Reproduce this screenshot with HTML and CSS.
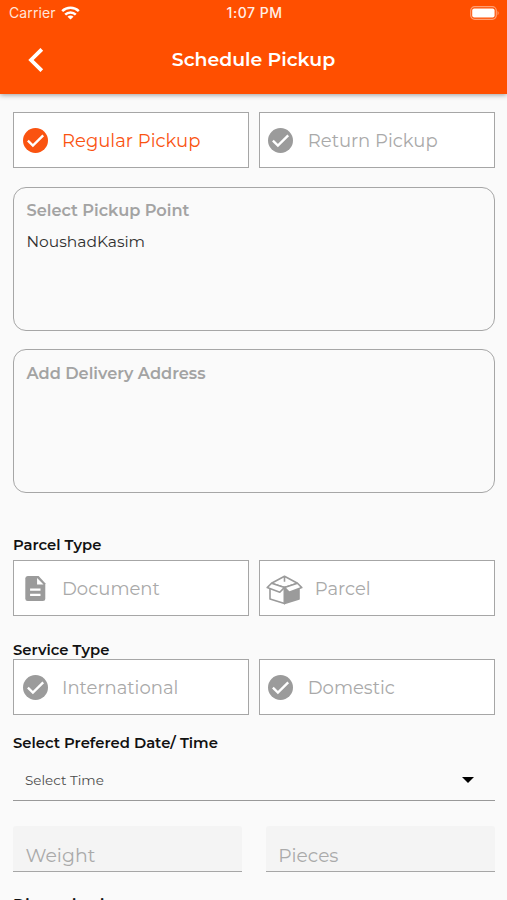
FILE: index.html
```html
<!DOCTYPE html>
<html lang="en">
<head>
<meta charset="utf-8">
<title>Schedule Pickup</title>
<link rel="stylesheet" href="styles.css">
</head>
<body>
<svg class="defs" width="0" height="0" aria-hidden="true">
  <symbol id="check" viewBox="0 0 24 24"><circle cx="12" cy="12" r="12" fill="currentColor"/><path d="M4.7 12.2l4.8 4.7L19.4 7.1" fill="none" stroke="#fff" stroke-width="2.3"/></symbol>
</svg>
<header class="top">
  <div class="status">
    <span class="carrier"><span>Carrier</span>
      <svg width="19" height="14" viewBox="0 0 19 14" fill="none" stroke="#fff" stroke-width="2.5"><path d="M1.2 5.2a11.8 11.8 0 0 1 16.6 0M4.2 8.6a7.5 7.5 0 0 1 10.6 0"/><path d="M9.5 13.6L6.5 10.8a4.2 4.2 0 0 1 6 0z" fill="#fff" stroke="none"/></svg>
    </span>
    <span class="clock">1:07 PM</span>
    <svg class="battery" width="30" height="14" viewBox="0 0 30 14"><rect x=".7" y=".7" width="25.6" height="12.6" rx="4" fill="none" stroke="#fff" stroke-opacity=".45" stroke-width="1.2"/><rect x="2.2" y="2.4" width="22.4" height="9.2" rx="2" fill="#fff"/><path d="M27.6 4.7q2 2.3 0 4.6z" fill="#fff" fill-opacity=".5"/></svg>
  </div>
  <div class="bar">
    <svg class="back" width="16" height="24" viewBox="0 0 16 24" fill="none" stroke="#fff" stroke-width="3.8"><path d="M13.8 1.3L3 12l10.8 10.7"/></svg>
    <h1 class="title">Schedule Pickup</h1>
  </div>
</header>
<main>
  <div class="pair">
    <div class="option active"><svg class="icon"><use href="#check"/></svg><span>Regular Pickup</span></div>
    <div class="option"><svg class="icon"><use href="#check"/></svg><span>Return Pickup</span></div>
  </div>
  <section class="card"><h2>Select Pickup Point</h2><p>NoushadKasim</p></section>
  <section class="card"><h2>Add Delivery Address</h2></section>
  <h3 class="label parcel-label">Parcel Type</h3>
  <div class="pair">
    <div class="option"><svg class="icon" viewBox="0 0 24 24"><path d="M4.5 0H15l6.4 6.9v14.7q0 2.4-2.4 2.4H4.5q-2.3 0-2.3-2.4V2.4Q2.2 0 4.5 0z" fill="currentColor"/><path d="M13.5 1.9v6.2h6.2zM6.8 12h10v2.1h-10zM6.8 17h10v2.1h-10z" fill="#fff"/></svg><span>Document</span></div>
    <div class="option parcel"><svg class="box" width="37" height="30" viewBox="0 0 37 30" fill="none" stroke="currentColor" stroke-width="1.6" stroke-linejoin="round"><path d="M18.5 12.4L33 14.5v9.6L18.5 28.6z" fill="currentColor"/><path d="M4 14v10l14.5 4.6V12.4M5.5 8.3L18.5 1.2 31.5 8.3M5.5 8.3l13 4.1 13-4.1M18.5 1.2v5.6"/><path d="M5.5 8.3L1.2 12.6l12.6 4.6 4.7-4.8zM31.5 8.3l4.3 4.3-12.6 4.6-4.7-4.8z" fill="#fff"/></svg><span>Parcel</span></div>
  </div>
  <h3 class="label service-label">Service Type</h3>
  <div class="pair">
    <div class="option"><svg class="icon"><use href="#check"/></svg><span>International</span></div>
    <div class="option"><svg class="icon"><use href="#check"/></svg><span>Domestic</span></div>
  </div>
  <h3 class="label date-label">Select Prefered Date/ Time</h3>
  <div class="select"><span>Select Time</span><svg width="12" height="6" viewBox="0 0 12 6"><path d="M0 0h12L6 6z"/></svg></div>
  <div class="fields">
    <div class="field weight">Weight</div>
    <div class="field">Pieces</div>
  </div>
  <h3 class="label dimension-label">Dimension in</h3>
</main>
</body>
</html>
```
FILE: styles.css
```css
* { box-sizing: border-box; }
html, body { height: 900px; overflow: hidden; }
body { margin: 0; background: #fafafa; font-family: Montserrat, Inter, sans-serif; color: #111; }
h1, h2, h3, p { margin: 0; white-space: nowrap; }
svg { flex: none; display: block; }
.defs { position: absolute; }
.top { height: 94px; background: #ff4f00; color: #fff; box-shadow: 0 1px 5px rgba(0,0,0,.38); }
.status { height: 26px; display: grid; grid-template-columns: 1fr auto 1fr; align-items: center; padding: 0 7px 0 9px; font-family: Inter, sans-serif; font-size: 14px; line-height: 20px; }
.carrier { display: flex; align-items: center; gap: 5px; color: #ffe5da; letter-spacing: .1px; }
.clock { font-weight: 500; color: #fff0e9; letter-spacing: .5px; }
.battery { justify-self: end; }
.bar { height: 67px; display: grid; grid-template-columns: 44px 1fr 44px; align-items: center; }
.back { justify-self: end; }
.title { text-align: center; font-size: 18.9px; font-weight: 600; line-height: 24px; }
main { padding: 18px 12.5px 0 13px; }
.pair { display: grid; grid-template-columns: 1fr 1fr; gap: 10px; }
.option { height: 56px; border: 1px solid #a6a6a6; background: #fff; display: flex; align-items: center; gap: 15px; padding-left: 8.5px; color: #9b9b9b; font-size: 18px; line-height: 24px; white-space: nowrap; }
.option span { color: #a9a9a9; margin-left: -.5px; padding-top: 1px; }
.option.active, .option.active span { color: #fa5310; }
.icon { width: 25px; height: 25px; }
.option.parcel { padding-left: 6.5px; gap: 12px; }
.box { margin-top: 3px; }
.card { height: 144px; margin-top: 18.5px; border: 1px solid #a6a6a6; border-radius: 13px; padding: 11.5px 12.5px; }
.card h2 { font-size: 16.2px; line-height: 22px; font-weight: 600; color: #a3a3a3; }
.card p { font-size: 15.5px; line-height: 22px; margin-top: 9.5px; color: #303030; }
.label { font-size: 14.8px; line-height: 20px; font-weight: 600; color: #111; }
.parcel-label { margin: 42px 0 5px; }
.service-label { margin: 24px 0 -1px; }
.date-label { margin-top: 18px; }
.select { height: 48px; border-bottom: 1px solid #999; display: flex; justify-content: space-between; align-items: center; padding: 8px 21px 1px 12px; font-size: 13.5px; color: #4b4b4b; }
.select svg { fill: #000; }
.fields { display: grid; grid-template-columns: 1fr 1fr; gap: 24px; margin-top: 25px; }
.field { height: 45.5px; background: #f4f4f4; border-bottom: 1px solid #a6a6a6; border-radius: 3px 3px 0 0; padding: 17.5px 12.5px 0; font-size: 18.6px; line-height: 24px; color: #aaa; }
.weight { font-size: 18.9px; }
.dimension-label { margin-top: 22px; }
```
